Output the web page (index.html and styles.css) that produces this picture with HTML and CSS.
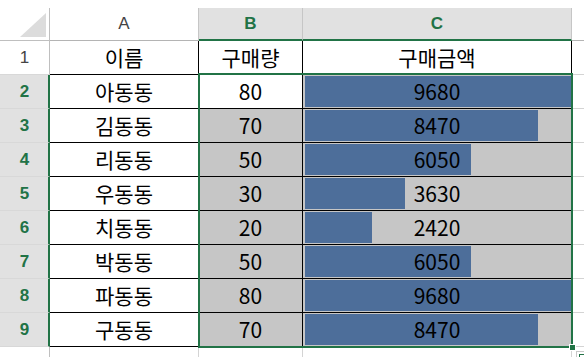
FILE: index.html
```html
<!DOCTYPE html>
<html lang="ko">
<head>
<meta charset="utf-8">
<title>Sheet</title>
<link rel="stylesheet" href="styles.css">
</head>
<body>
<div class="sheet">
  <div class="corner"><svg class="tri" width="26" height="24" viewBox="0 0 26 24"><polygon points="0,24 26,24 26,0" fill="#dcdcdc"/></svg></div>
  <div class="ch">A</div>
  <div class="ch sel">B</div>
  <div class="ch sel">C</div>
  <div class="ch end"></div>

  <div class="rh">1</div>
  <div class="c">이름</div>
  <div class="c">구매량</div>
  <div class="c">구매금액</div>
  <div class="d"></div>

  <div class="rh sel">2</div>
  <div class="c">아동동</div>
  <div class="c">80</div>
  <div class="c bar"><span class="fill" style="width:266px"></span><span class="num">9680</span></div>
  <div class="d"></div>

  <div class="rh sel">3</div>
  <div class="c">김동동</div>
  <div class="c hl">70</div>
  <div class="c bar"><span class="fill" style="width:233px"></span><span class="num">8470</span></div>
  <div class="d"></div>

  <div class="rh sel">4</div>
  <div class="c">리동동</div>
  <div class="c hl">50</div>
  <div class="c bar"><span class="fill" style="width:166px"></span><span class="num">6050</span></div>
  <div class="d"></div>

  <div class="rh sel">5</div>
  <div class="c">우동동</div>
  <div class="c hl">30</div>
  <div class="c bar"><span class="fill" style="width:100px"></span><span class="num">3630</span></div>
  <div class="d"></div>

  <div class="rh sel">6</div>
  <div class="c">치동동</div>
  <div class="c hl">20</div>
  <div class="c bar"><span class="fill" style="width:67px"></span><span class="num">2420</span></div>
  <div class="d"></div>

  <div class="rh sel">7</div>
  <div class="c">박동동</div>
  <div class="c hl">50</div>
  <div class="c bar"><span class="fill" style="width:166px"></span><span class="num">6050</span></div>
  <div class="d"></div>

  <div class="rh sel">8</div>
  <div class="c">파동동</div>
  <div class="c hl">80</div>
  <div class="c bar"><span class="fill" style="width:266px"></span><span class="num">9680</span></div>
  <div class="d"></div>

  <div class="rh sel">9</div>
  <div class="c">구동동</div>
  <div class="c hl">70</div>
  <div class="c bar"><span class="fill" style="width:233px"></span><span class="num">8470</span></div>
  <div class="d"></div>

  <div class="rh last"></div>
  <div class="e"></div>
  <div class="e"></div>
  <div class="e"></div>
  <div class="e end"></div>

  <div class="selection"></div>
  <div class="handle"></div>
  <div class="quick"></div>
</div>
</body>
</html>
```
FILE: styles.css
```css
html, body {
  margin: 0;
  padding: 0;
  background: #ffffff;
  overflow: hidden;
}

.sheet {
  margin-top: 8px;
  position: relative;
  display: grid;
  grid-template-columns: 50px 149px 104px 269px 12px;
  grid-template-rows: 33px repeat(9, 34px) 12px;
  font-family: "Noto Sans CJK KR", "Noto Sans", sans-serif;
}

.sheet > div {
  box-sizing: border-box;
}

.corner {
  border-right: 1px solid #bfbfbf;
  border-bottom: 1px solid #bfbfbf;
  display: flex;
  align-items: flex-end;
  justify-content: flex-end;
  padding: 0 3px 3px 0;
}

.tri {
  display: block;
}

.ch {
  display: flex;
  align-items: center;
  justify-content: center;
  font-family: "Liberation Sans", Arial, sans-serif;
  font-size: 17px;
  color: #444444;
  background: #ffffff;
  border-right: 1px solid #c6c6c6;
  border-bottom: 1px solid #b4b4b4;
}

.ch.sel {
  background: #e1e1e1;
  color: #217346;
  font-weight: bold;
  border-bottom: 2px solid #217346;
}

.ch.end {
  border-right: none;
}

.rh {
  display: flex;
  align-items: center;
  justify-content: center;
  font-family: "Liberation Sans", Arial, sans-serif;
  font-size: 17px;
  color: #444444;
  background: #ffffff;
  border-right: 1px solid #bfbfbf;
  border-bottom: 1px solid #d8d8d8;
}

.rh.sel {
  background: #e1e1e1;
  color: #217346;
  font-weight: bold;
  border-right: 2px solid #217346;
  padding-left: 1px;
}

.rh.last {
  border-bottom: none;
}

.c {
  display: flex;
  align-items: center;
  justify-content: center;
  font-size: 21px;
  color: #000000;
  background: #ffffff;
  border-right: 1px solid #000000;
  border-bottom: 1px solid #000000;
  line-height: 1;
}

.c.hl {
  background: #c6c6c6;
}

.c.bar {
  display: grid;
  grid-template-columns: 1fr;
  grid-template-rows: 1fr;
  justify-content: stretch;
  align-content: stretch;
  background: #c6c6c6;
}

.fill {
  grid-area: 1 / 1;
  justify-self: start;
  align-self: stretch;
  margin: 1px 0 1px 2px;
  background: #4d6e9a;
}

.num {
  grid-area: 1 / 1;
  justify-self: center;
  align-self: center;
}

.d {
  border-bottom: 1px solid #d4d4d4;
}

.e {
  border-right: 1px solid #d4d4d4;
}

.e.end {
  border-right: none;
}

.selection {
  position: absolute;
  left: 198px;
  top: 65px;
  width: 375px;
  height: 275px;
  border: 2px solid #217346;
  box-sizing: border-box;
  pointer-events: none;
}

.handle {
  position: absolute;
  left: 569px;
  top: 336px;
  width: 7px;
  height: 7px;
  background: #217346;
  border: 1px solid #ffffff;
  box-sizing: border-box;
}

.quick {
  position: absolute;
  left: 576px;
  top: 343px;
  width: 14px;
  height: 14px;
  border: 1px solid #c8c8c8;
  box-sizing: border-box;
  background: #ffffff;
}

.quick::after {
  content: "";
  position: absolute;
  left: 2px;
  top: 2px;
  width: 12px;
  height: 12px;
  border: 1px solid #217346;
}
```
